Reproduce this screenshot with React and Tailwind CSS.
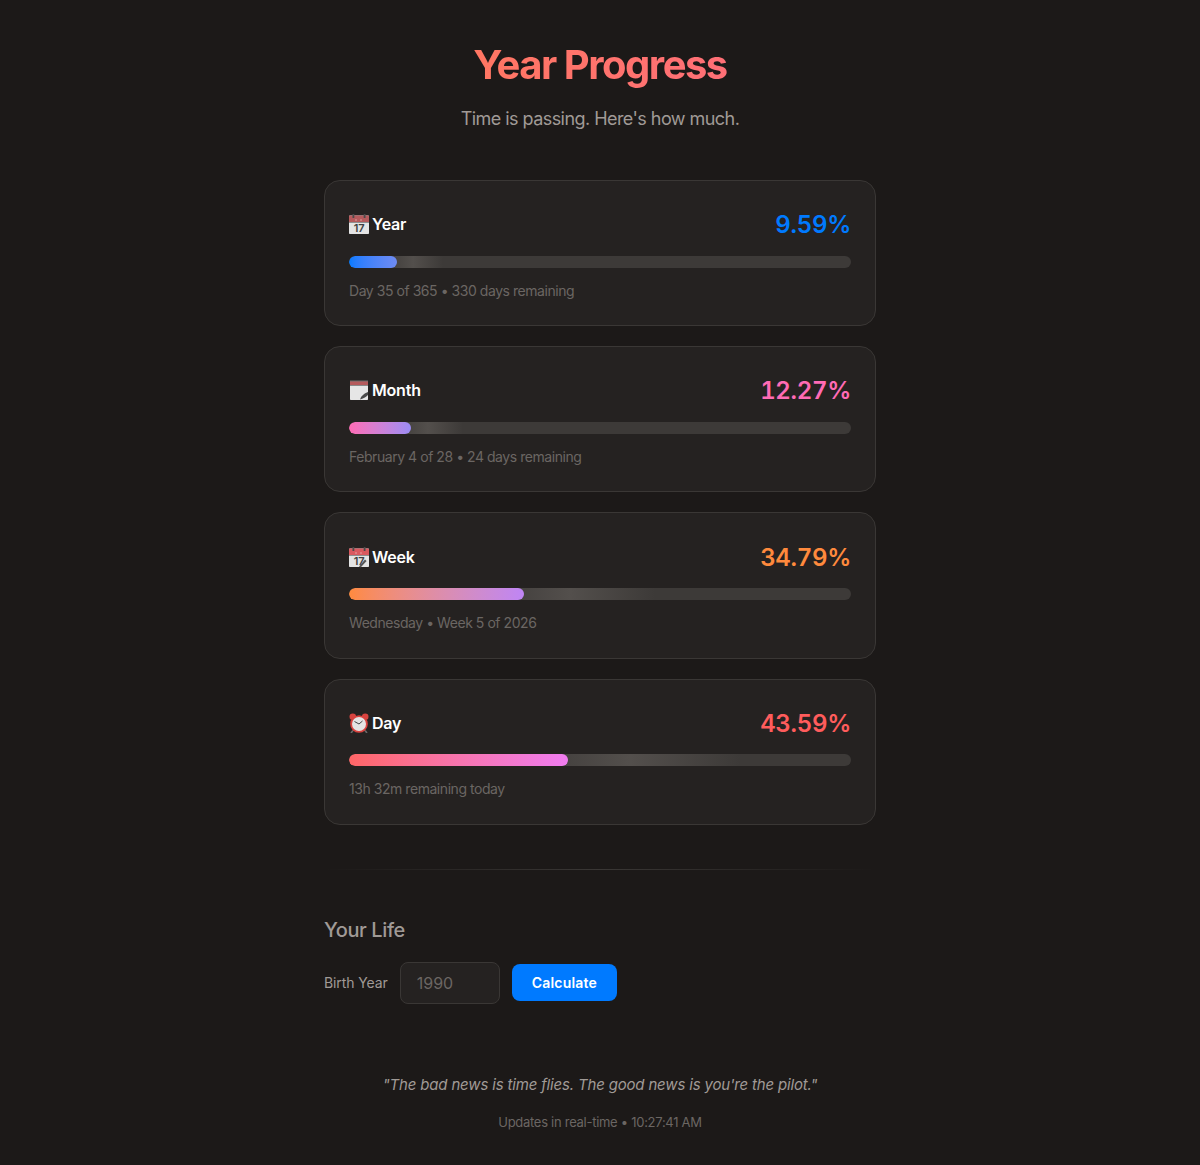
import React from 'react';

const CalendarIcon = ({ tear, pencil }) => (
  <svg viewBox="0 0 20 20" className="h-5 w-5 shrink-0 overflow-visible">
    <rect x="0" y="1.500" width="20" height="18.500" rx="0.800" fill="#e4e4e4" />
    <rect x="0" y="1.500" width="20" height="7" rx="0.800" fill={tear ? '#d9595f' : '#b55a5c'} />
    <rect x="0" y="8" width="20" height="1" fill="#8f8f8f" />
    <rect x="3.500" y="0" width="1.800" height="4" fill="#4a4a4a" />
    <rect x="14.700" y="0" width="1.800" height="4" fill="#4a4a4a" />
    <circle cx="7" cy="6" r="0.700" fill="#e9b9b9" />
    <circle cx="12" cy="6" r="0.700" fill="#e9b9b9" />
    <text x="10" y="18" textAnchor="middle" fontSize="11" fontWeight="600" fill="#3f3f3f" fontFamily="Inter, sans-serif">17</text>
    {pencil && <path d="M10 19.500l6-7 1.600 1.400-6 6.600z" fill="#555" />}
  </svg>
);

const NotepadIcon = () => (
  <svg viewBox="0 0 20 20" className="h-5 w-5 shrink-0">
    <rect x="1" y="2" width="18" height="18" rx="0.800" fill="#e6e6e6" />
    <rect x="1" y="1" width="18" height="4" fill="#b55a5c" />
    <rect x="1" y="0.500" width="18" height="1" fill="#6e6e6e" />
    <rect x="1" y="5" width="18" height="1" fill="#8a8a8a" />
    <path d="M11 19.500c1-3 3-5.500 8-7.500v3c-2 2-5 4-8 4.500z" fill="#4a4a4a" />
  </svg>
);

const ClockIcon = () => (
  <svg viewBox="0 0 20 20" className="h-5 w-5 shrink-0">
    <path d="M4 17.500l-2 2.500M16 17.500l2 2.500" stroke="#6b6b6b" strokeWidth="1.600" />
    <circle cx="3.800" cy="3.800" r="3.300" fill="#d8433f" />
    <circle cx="16.200" cy="3.800" r="3.300" fill="#d8433f" />
    <circle cx="10" cy="11" r="8.800" fill="#d8433f" />
    <circle cx="10" cy="11" r="7" fill="#e4e4e4" />
    <path d="M10 11L5.500 8.500M10 11l3.500-3" stroke="#444" strokeWidth="1" />
  </svg>
);

const cards = [
  { icon: <CalendarIcon />, label: 'Year', pct: '9.59%', color: 'text-[#007aff]', fill: 'w-[48px] from-[#007aff] to-[#6e8bf3]', sheen: 'left-[34px] w-[60px]', detail: 'Day 35 of 365 • 330 days remaining' },
  { icon: <NotepadIcon />, label: 'Month', pct: '12.27%', color: 'text-[#ff6bb5]', fill: 'w-[62px] from-[#ff6bb5] to-[#9a8cf5]', sheen: 'left-[44px] w-[70px]', detail: 'February 4 of 28 • 24 days remaining' },
  { icon: <CalendarIcon tear pencil />, label: 'Week', pct: '34.79%', color: 'text-[#ff8a3d]', fill: 'w-[175px] from-[#ff8a3d] to-[#bf85f5]', sheen: 'left-[136px] w-[170px]', detail: 'Wednesday • Week 5 of 2026' },
  { icon: <ClockIcon />, label: 'Day', pct: '43.59%', color: 'text-[#ff5c5c]', fill: 'w-[219px] from-[#ff6666] to-[#f07cf0]', sheen: 'left-[171px] w-[220px]', detail: '13h 32m remaining today' },
];

const ProgressCard = ({ icon, label, pct, color, fill, sheen, detail }) => (
  <div className="rounded-2xl border border-[#3a3735] bg-[#252221] px-6 pt-6 pb-[24.45px]">
    <div className="mb-3 flex h-[38.8px] items-center justify-between">
      <div className="flex items-center gap-[3px] text-base font-semibold tracking-[-0.2px] text-white">
        {icon}
        <span>{label}</span>
      </div>
      <span className={`pt-[2px] text-2xl font-semibold tracking-[-0.3px] tabular-nums ${color}`}>{pct}</span>
    </div>
    <div className="relative h-3 overflow-hidden rounded-md bg-[#3d3a38]">
      <div className={`absolute top-0 bottom-0 bg-gradient-to-r from-transparent via-[#534f4c] to-transparent ${sheen}`} />
      <div className={`absolute top-0 bottom-0 left-0 rounded-md bg-gradient-to-r ${fill}`} />
    </div>
    <p className="mt-3 text-sm leading-[21px] tracking-[-0.45px] text-[#6b6663]">{detail}</p>
  </div>
);

export default function App() {
  return (
    <div className="min-h-[1165px] bg-[#1c1918] font-['Inter',sans-serif]">
      <div className="mx-auto w-[552px] pt-10 pb-6">
        <header className="mb-[47.8px] text-center">
          <h1 className="bg-gradient-to-r from-[#ff7a55] to-[#ff6b81] bg-clip-text text-[40px] leading-[50px] font-bold tracking-[-1.5px] text-transparent">Year Progress</h1>
          <p className="mt-[15px] text-lg leading-[27px] tracking-[-0.55px] text-[#a09a96]">Time is passing. Here's how much.</p>
        </header>

        <div className="flex flex-col gap-5">
          {cards.map((c) => <ProgressCard key={c.label} {...c} />)}
        </div>

        <div className="mt-[44.2px] h-px bg-gradient-to-r from-transparent via-[#3a3735] to-transparent" />

        <section className="mt-[45.3px]">
          <h2 className="text-xl leading-[30px] font-medium tracking-[-0.4px] text-[#a09a96]">Your Life</h2>
          <div className="mt-[17px] flex items-center gap-3">
            <label className="text-sm tracking-[-0.1px] text-[#a09a96]">Birth Year</label>
            <input placeholder="1990" className="h-[42px] w-[100px] rounded-lg border border-[#3a3735] bg-[#252221] px-4 text-base text-white placeholder:text-[#6b6663] focus:outline-none" />
            <button className="mb-[2px] h-[37px] rounded-lg bg-[#007aff] px-5 pt-px text-sm font-semibold tracking-[0.2px] text-white">Calculate</button>
          </div>
        </section>

        <footer className="mt-[69px] text-center">
          <p className="text-[15px] leading-[24px] tracking-[-0.17px] text-[#a09a96] italic">"The bad news is time flies. The good news is you're the pilot."</p>
          <p className="mt-[15px] text-[13px] leading-[20px] tracking-[-0.28px] text-[#6b6663]">Updates in real-time • 10:27:41 AM</p>
        </footer>
      </div>
    </div>
  );
}
